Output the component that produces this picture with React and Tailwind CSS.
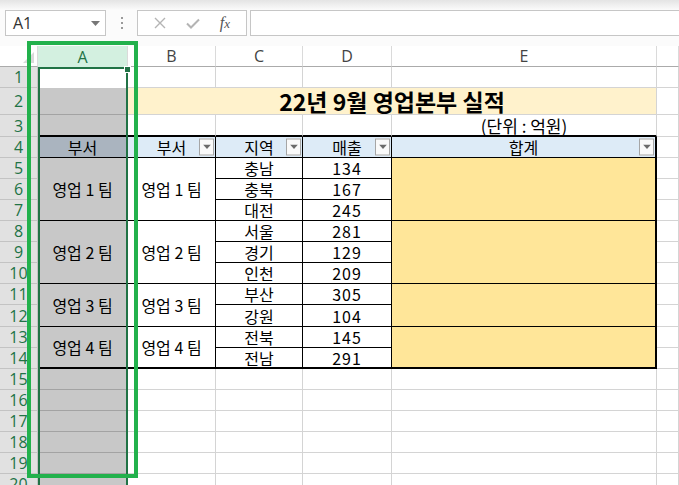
import React from 'react'

/* ── small bits ─────────────────────────────────────────────── */

const KR = "font-['Noto_Sans_CJK_KR',sans-serif]"
const UI = "font-['Open_Sans','Liberation_Sans',sans-serif]"

function FilterButton() {
  return (
    <span className="absolute right-[1px] top-1/2 -translate-y-1/2 w-[15px] h-[17px] border border-[#a6a6a6] bg-[#fafafa] flex items-center justify-center">
      <svg width="8" height="5" viewBox="0 0 8 5">
        <path d="M0 0 L8 0 L4 4.5 Z" fill="#6b6b6b" />
      </svg>
    </span>
  )
}

function Cell({ className = '', children }) {
  return (
    <div className={`relative flex items-center justify-center whitespace-nowrap leading-none ${className}`}>
      {children}
    </div>
  )
}

// plain empty cell with excel gridlines
const G = 'border-r border-b border-[#d4d4d4]'
// column A (selected, shaded)
const SEL = 'border-r border-b border-[#a3a3a3] bg-[#c8c8c8]'
// inside the table
const T = 'border-r border-b border-black'

function RowHead({ n }) {
  return (
    <div className={`flex items-center justify-center leading-none bg-[#e1e1e1] border-r border-b border-[#c3c3c3] text-[16px] text-[#217346] ${UI}`}>
      {n}
    </div>
  )
}

const groups = [
  { name: '영업 1 팀', rows: [['충남', 134], ['충북', 167], ['대전', 245]] },
  { name: '영업 2 팀', rows: [['서울', 281], ['경기', 129], ['인천', 209]] },
  { name: '영업 3 팀', rows: [['부산', 305], ['강원', 104]] },
  { name: '영업 4 팀', rows: [['전북', 145], ['전남', 291]] },
]

const spanClass = { 2: 'row-span-2', 3: 'row-span-3' }

export default function App() {
  let rowNo = 5
  const body = []
  groups.forEach((g, gi) => {
    const last = gi === groups.length - 1
    g.rows.forEach(([region, sales], ri) => {
      const bottomRow = last && ri === g.rows.length - 1
      body.push(<RowHead key={`rh${rowNo}`} n={rowNo} />)
      if (ri === 0) {
        const span = spanClass[g.rows.length]
        body.push(
          <Cell
            key={`a${rowNo}`}
            className={`${span} bg-[#c8c8c8] border-r border-black ${last ? 'border-b-2' : 'border-b'} ${KR} text-[16px] text-black`}
          >
            {g.name}
          </Cell>
        )
        body.push(
          <Cell
            key={`b${rowNo}`}
            className={`${span} bg-white border-r border-black ${last ? 'border-b-2' : 'border-b'} ${KR} text-[16px] text-black`}
          >
            {g.name}
          </Cell>
        )
      }
      body.push(
        <Cell key={`c${rowNo}`} className={`${T} ${bottomRow ? 'border-b-2' : ''} ${KR} text-[16px] text-black`}>
          {region}
        </Cell>
      )
      body.push(
        <Cell key={`d${rowNo}`} className={`${T} ${bottomRow ? 'border-b-2' : ''} ${KR} text-[16px] tracking-[1px] text-black`}>
          {sales}
        </Cell>
      )
      if (ri === 0) {
        body.push(
          <Cell
            key={`e${rowNo}`}
            className={`${spanClass[g.rows.length]} bg-[#ffe699] border-black border-r-2 ${last ? 'border-b-2' : 'border-b'}`}
          />
        )
      }
      body.push(<Cell key={`f${rowNo}`} className={G} />)
      rowNo++
    })
  })

  const tail = []
  for (let r = 15; r <= 20; r++) {
    tail.push(<RowHead key={`rh${r}`} n={r} />)
    tail.push(<Cell key={`a${r}`} className={SEL} />)
    tail.push(<Cell key={`b${r}`} className={G} />)
    tail.push(<Cell key={`c${r}`} className={G} />)
    tail.push(<Cell key={`d${r}`} className={G} />)
    tail.push(<Cell key={`e${r}`} className={G} />)
    tail.push(<Cell key={`f${r}`} className={G} />)
  }

  const colHead = 'flex items-center justify-center leading-none bg-white border-r border-b border-r-[#dadada] border-b-[#ababab] text-[16px] text-[#444] ' + UI

  return (
    <div className="relative w-[679px] h-[485px] overflow-hidden bg-white">
      {/* ribbon shadow */}
      <div className="h-[10px] bg-gradient-to-b from-[#e4e4e4] to-[#fbfbfb]" />

      {/* formula bar */}
      <div className="h-[26px] flex items-stretch bg-[#fbfbfb]">
        <div className={`ml-[5px] w-[101px] border border-[#c6c6c6] bg-white flex items-center justify-between pl-[7px] pr-[5px] text-[16px] text-[#333] ${UI}`}>
          <span>A1</span>
          <svg width="9" height="5" viewBox="0 0 9 5">
            <path d="M0 0 L9 0 L4.5 5 Z" fill="#777" />
          </svg>
        </div>
        <div className="w-[31px] flex flex-col items-center justify-center gap-[3px]">
          <span className="w-[2px] h-[2px] bg-[#9a9a9a]" />
          <span className="w-[2px] h-[2px] bg-[#9a9a9a]" />
          <span className="w-[2px] h-[2px] bg-[#9a9a9a]" />
        </div>
        <div className="w-[110px] border border-[#c6c6c6] bg-white flex items-center justify-around px-[6px]">
          <svg width="12" height="12" viewBox="0 0 12 12">
            <path d="M1 1 L11 11 M11 1 L1 11" stroke="#b4b4b4" strokeWidth="1.4" />
          </svg>
          <svg width="14" height="11" viewBox="0 0 14 11">
            <path d="M1 5.5 L5 9.5 L13 1.5" stroke="#b4b4b4" strokeWidth="2" fill="none" />
          </svg>
          <span className="font-['Liberation_Serif',serif] italic text-[16px] text-[#555] leading-none">
            f<span className="text-[13px]">x</span>
          </span>
        </div>
        <div className="ml-[3px] flex-1 border border-[#c6c6c6] border-r-0 bg-white" />
      </div>

      <div className="h-[10px] bg-[#fbfbfb]" />

      {/* sheet */}
      <div className="relative grid grid-cols-[38px_90px_88px_87px_89px_265px_1fr] grid-rows-[21px_21px_27px_22px_21px_21px_21px_21px_21px_21px_21px_21px_22px_21px_21px_21px_21px_21px_21px_21px_21px]">
        {/* column headers */}
        <div className="relative bg-white border-r border-b border-r-[#dadada] border-b-[#ababab]">
          <svg className="absolute right-[3px] bottom-[3px]" width="11" height="11" viewBox="0 0 11 11">
            <path d="M11 0 L11 11 L0 11 Z" fill="#dadada" />
          </svg>
        </div>
        <div className={`flex items-center justify-center leading-none bg-[#d3f0e0] border-r border-r-[#dadada] text-[16px] text-[#217346] ${UI}`}>A</div>
        <div className={colHead}>B</div>
        <div className={colHead}>C</div>
        <div className={colHead}>D</div>
        <div className={colHead}>E</div>
        <div className={colHead} />

        {/* row 1 */}
        <RowHead n={1} />
        <Cell className="bg-white" />
        <Cell className={G} />
        <Cell className={G} />
        <Cell className={G} />
        <Cell className={G} />
        <Cell className={G} />

        {/* row 2 */}
        <RowHead n={2} />
        <Cell className={SEL} />
        <Cell className={`col-span-4 bg-[#fff2cc] border-r border-b border-[#d4d4d4] ${KR} font-bold text-[23px] text-black`}>
          22년 9월 영업본부 실적
        </Cell>
        <Cell className={G} />

        {/* row 3 */}
        <RowHead n={3} />
        <Cell className="bg-[#c8c8c8] border-r border-r-[#a3a3a3] border-b-2 border-b-black" />
        <Cell className="border-r border-r-[#d4d4d4] border-b-2 border-b-black" />
        <Cell className="border-r border-r-[#d4d4d4] border-b-2 border-b-black" />
        <Cell className="border-r border-r-[#d4d4d4] border-b-2 border-b-black" />
        <Cell className={`border-r border-r-[#d4d4d4] border-b-2 border-b-black ${KR} text-[17px] text-black`}>
          (단위 : 억원)
        </Cell>
        <Cell className={G} />

        {/* row 4 : headers */}
        <RowHead n={4} />
        <Cell className={`${T} bg-[#aab4bf] ${KR} text-[16px] text-black`}>부서</Cell>
        <Cell className={`${T} bg-[#ddebf7] ${KR} text-[16px] text-black`}>
          부서
          <FilterButton />
        </Cell>
        <Cell className={`${T} bg-[#ddebf7] ${KR} text-[16px] text-black`}>
          지역
          <FilterButton />
        </Cell>
        <Cell className={`${T} bg-[#ddebf7] ${KR} text-[16px] text-black`}>
          매출
          <FilterButton />
        </Cell>
        <Cell className={`border-black border-b border-r-2 bg-[#ddebf7] ${KR} text-[16px] text-black`}>
          합계
          <FilterButton />
        </Cell>
        <Cell className={G} />

        {body}
        {tail}

        {/* selected column A outline */}
        <div className="absolute left-[38px] top-[21px] w-[90px] bottom-0 border-2 border-[#217346] pointer-events-none">
          <span className="absolute -top-[2px] -right-[4px] w-[5px] h-[5px] bg-[#217346] outline outline-1 outline-white" />
        </div>
      </div>

      {/* green annotation box */}
      <div className="absolute left-[27px] top-[41px] w-[111px] h-[437px] border-4 border-[#22b14c] pointer-events-none" />
    </div>
  )
}
